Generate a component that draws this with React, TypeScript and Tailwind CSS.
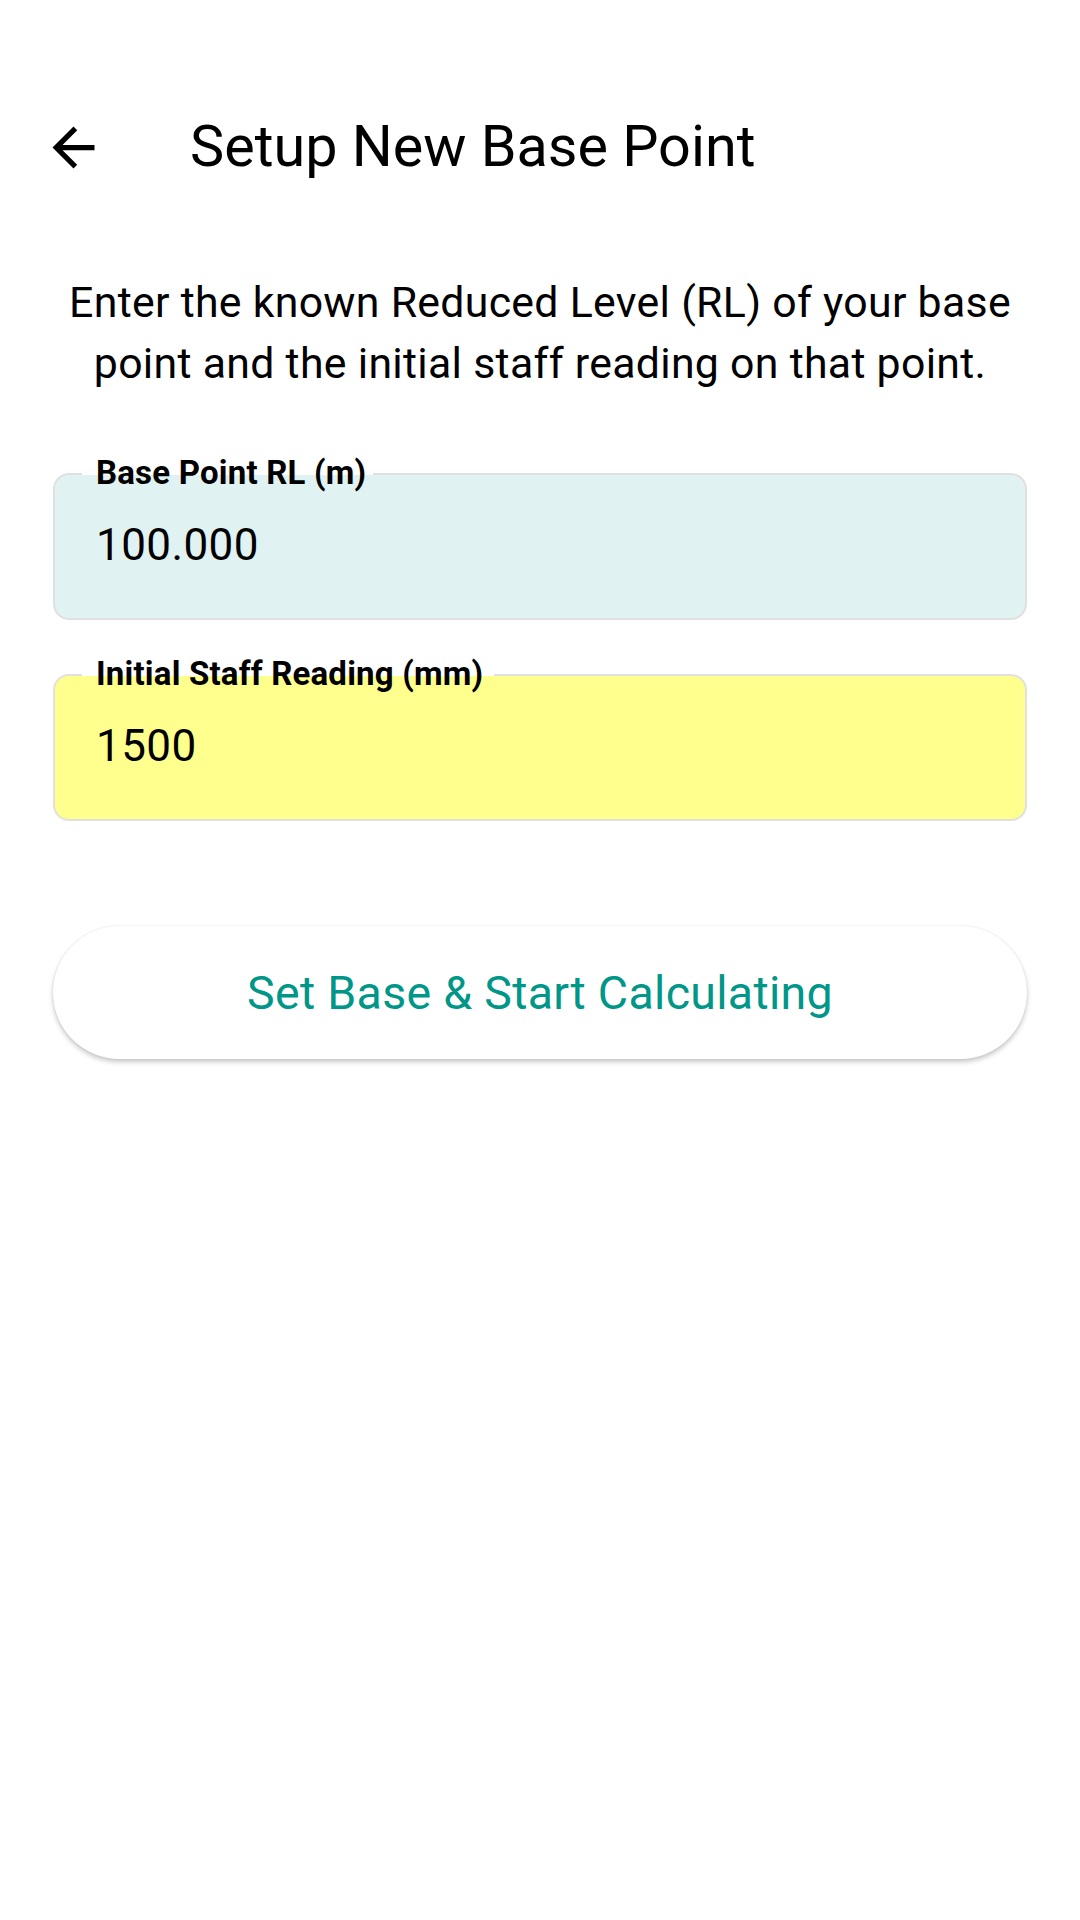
import React from "react";

function Field({ label, value, bg, notchWidth }: { label: string; value: string; bg: string; notchWidth: string }) {
  return (
    <div className={`relative h-[147px] rounded-[16px] border-2 border-[#e0e0e0] ${bg} flex items-center pl-[41px]`}>
      <span className={`absolute top-[-2px] left-[27px] h-[2px] bg-white ${notchWidth}`} />
      <span className="absolute left-[41px] top-[-28px] text-[33px] font-bold leading-[52px] text-black tracking-[0.2px] whitespace-nowrap">
        {label}
      </span>
      <span className="text-[44px] leading-[50px] text-black tracking-[0.4px] mt-[-4px]">{value}</span>
    </div>
  );
}

export default function App() {
  return (
    <div className="w-[1080px] h-[1920px] bg-white" style={{ fontFamily: "Roboto, 'Noto Sans', sans-serif" }}>
      <div className="pt-[84px] h-[210px] flex items-start">
        <div className="h-[126px] flex items-center w-full">
          <div className="w-[63px] h-[63px] ml-[42px]">
            <svg viewBox="0 0 24 24" width="63" height="63">
              <path d="M20 11H7.83l5.59-5.59L12 4l-8 8 8 8 1.41-1.41L7.83 13H20v-2z" fill="#000" />
            </svg>
          </div>
          <div className="ml-[85px] text-[57.5px] leading-[70px] text-black">Setup New Base Point</div>
        </div>
      </div>
      <div className="px-[53px]">
        <p className="mt-[62px] text-center text-[42.8px] leading-[61px] text-black tracking-[0.3px]">
          Enter the known Reduced Level (RL) of your base point and the initial staff reading on that point.
        </p>
        <div className="mt-[79px]">
          <Field label="Base Point RL (m)" value="100.000" bg="bg-[#e0f2f1]" notchWidth="w-[291px]" />
        </div>
        <div className="mt-[54px]">
          <Field label="Initial Staff Reading (mm)" value="1500" bg="bg-[#ffff8d]" notchWidth="w-[412px]" />
        </div>
        <button className="mt-[105px] w-full h-[133px] rounded-full bg-white shadow-[0_3px_5px_rgba(0,0,0,0.22),0_0_2px_rgba(0,0,0,0.08)] flex items-center justify-center">
          <span className="text-[46.5px] leading-[56px] text-[#009688] tracking-[0.3px]">Set Base &amp; Start Calculating</span>
        </button>
      </div>
    </div>
  );
}
